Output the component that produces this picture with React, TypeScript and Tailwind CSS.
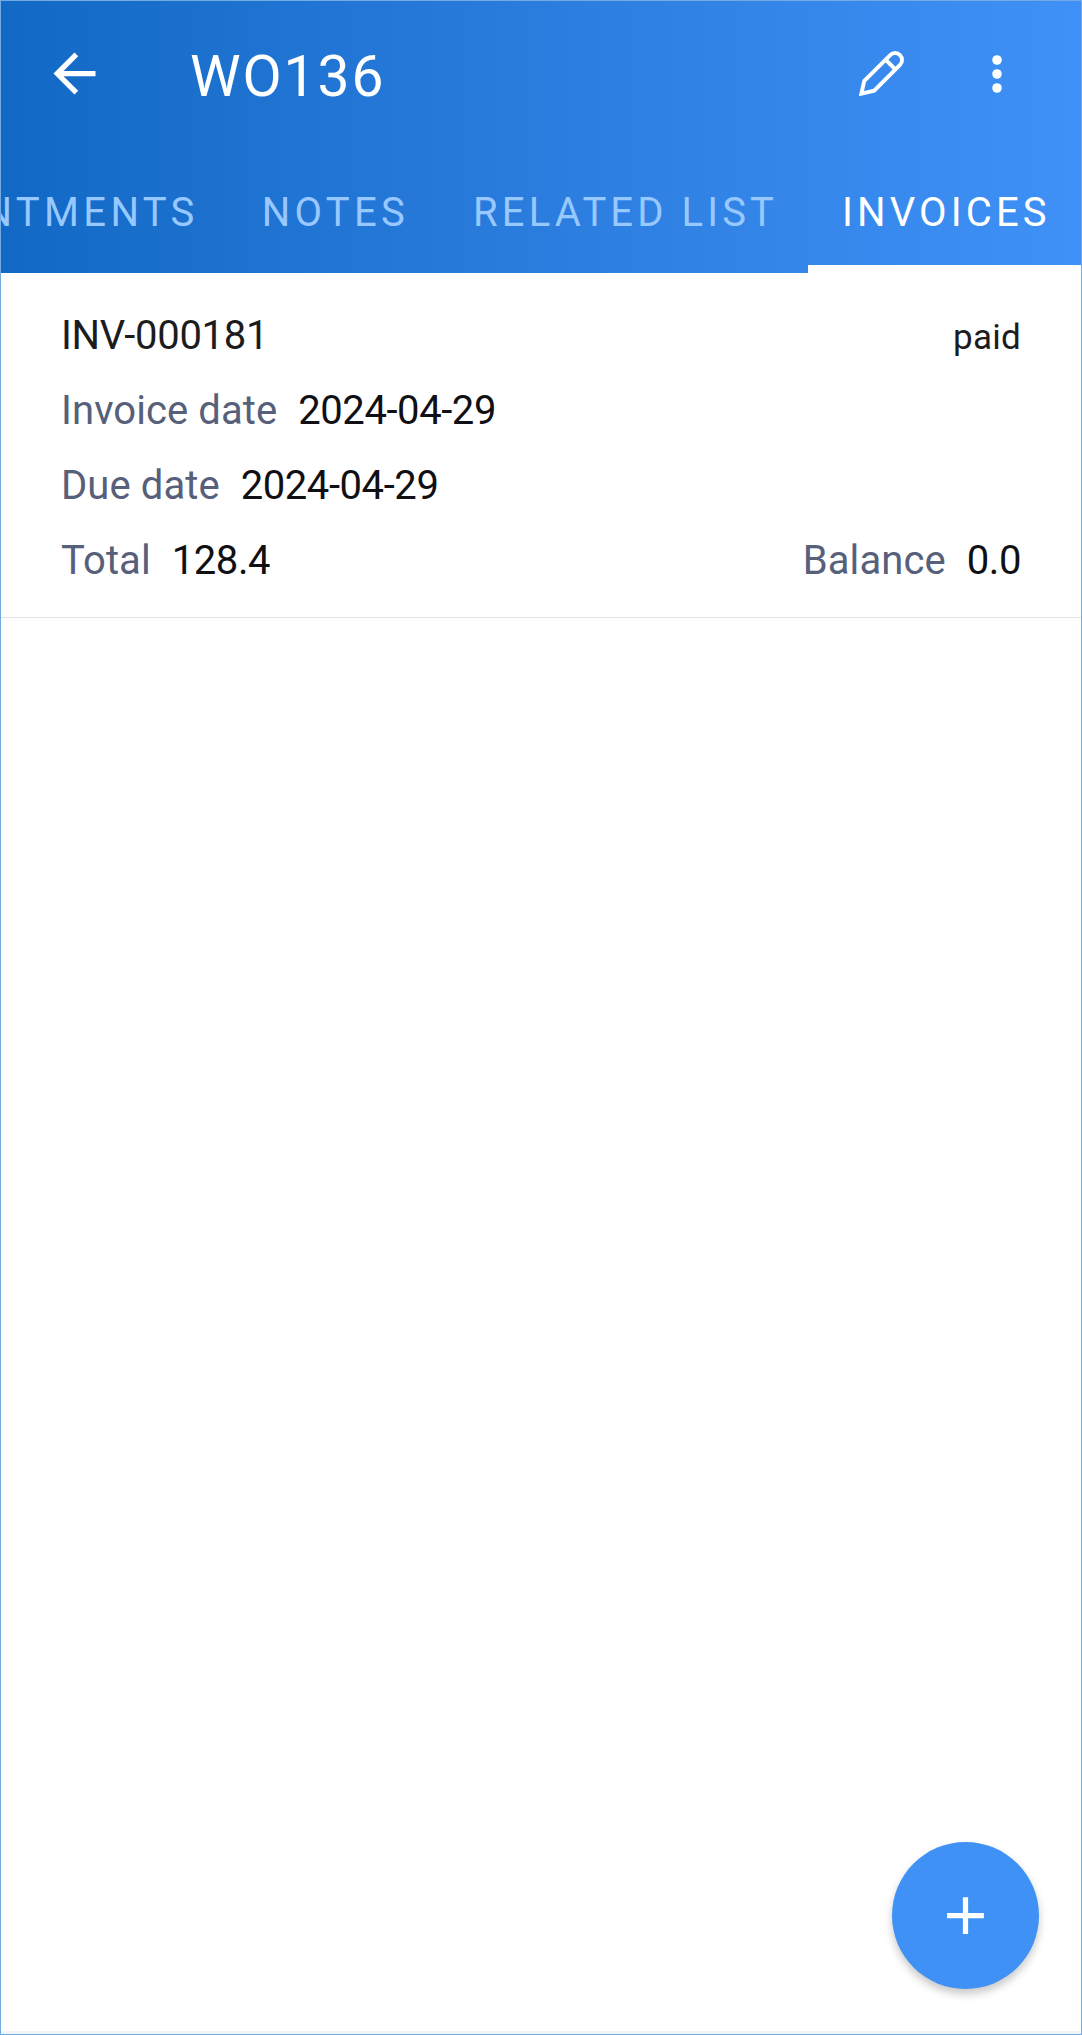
import type { ReactNode } from "react";

function BackIcon() {
  return (
    <svg viewBox="0 0 24 24" className="mb-[6px] size-[63px] fill-white">
      <path d="M20 11H7.83l5.59-5.59L12 4l-8 8 8 8 1.41-1.41L7.83 13H20v-2z" />
    </svg>
  );
}

function PencilIcon() {
  return (
    <svg viewBox="0 0 45 45" className="mb-[6px] size-[45px]" fill="none" stroke="#fff" strokeWidth="3.9">
      <path d="M5.3 29.8 31.2 4.1A6.9 6.9 0 0 1 41 13.9L15.2 39.7 2.3 42.7Z" />
      <path d="M26.6 8.7 36.4 18.5" />
    </svg>
  );
}

function MoreIcon() {
  return (
    <svg viewBox="0 0 24 24" className="mb-[6px] size-14 fill-white">
      <circle cx="12" cy="6" r="2.05" />
      <circle cx="12" cy="12" r="2.05" />
      <circle cx="12" cy="18" r="2.05" />
    </svg>
  );
}

function Tab({ className = "", children }: { className?: string; children: ReactNode }) {
  return (
    <div className={`flex h-full shrink-0 items-center text-[40px] leading-none whitespace-nowrap text-[#97c8ff] ${className}`}>
      {children}
    </div>
  );
}

function Field({ label, value }: { label: string; value: string }) {
  return (
    <div className="flex gap-[21px]">
      <span className="tracking-[0.08px] text-[#56607a]">{label}</span>
      <span className="tracking-[-0.42px] text-[#101014]">{value}</span>
    </div>
  );
}

export default function App() {
  return (
    <div className="relative flex h-[2035px] w-[1082px] flex-col overflow-hidden border border-[#74abe2] bg-white font-[Roboto,sans-serif]">
      <header className="flex h-[272px] shrink-0 flex-col bg-linear-to-r from-[#1169c5] to-[#3f91f7]">
        <div className="flex h-[151px] items-center pr-[56px] pl-[42px]">
          <BackIcon />
          <h1 className="ml-[84px] flex-1 text-[57px] leading-none tracking-[1.9px] text-white">WO136</h1>
          <PencilIcon />
          <span className="w-[65px]" />
          <MoreIcon />
        </div>
        <nav className="flex flex-1 justify-end overflow-hidden">
          <Tab className="pr-[32px] tracking-[4.35px]">APPOINTMENTS</Tab>
          <Tab className="pr-[32px] pl-[31px] tracking-[4.3px]">NOTES</Tab>
          <Tab className="pr-[30px] pl-[32px] tracking-[4.1px]">RELATED LIST</Tab>
          <Tab className="relative w-[273px] pl-[34px] tracking-[4.15px] text-white!">
            INVOICES
            <span className="absolute inset-x-0 bottom-0 h-2 bg-white" />
          </Tab>
        </nav>
      </header>

      <main className="flex-1">
        <article className="border-b border-[#dfe2e6] pt-[25px] pr-[60px] pb-[19px] pl-[60px] text-[40px] leading-[75px]">
          <div className="flex h-[75px] items-baseline justify-between text-[#1c1c1e]">
            <span className="tracking-[-0.3px]">INV-000181</span>
            <span className="text-[35px] tracking-[0.25px]">paid</span>
          </div>
          <Field label="Invoice date" value="2024-04-29" />
          <Field label="Due date" value="2024-04-29" />
          <div className="flex justify-between">
            <Field label="Total" value="128.4" />
            <Field label="Balance" value="0.0" />
          </div>
        </article>
      </main>

      <div className="h-[3px] shrink-0 bg-[#eff5fa]" />

      <button className="absolute right-[42px] bottom-[45px] flex size-[147px] items-center justify-center rounded-full bg-[#3f91f5] shadow-[0_5px_9px_rgba(0,0,0,0.22)]">
        <svg viewBox="0 0 24 24" className="size-[63px] fill-white">
          <path d="M19 13h-6v6h-2v-6H5v-2h6V5h2v6h6v2z" />
        </svg>
      </button>
    </div>
  );
}
